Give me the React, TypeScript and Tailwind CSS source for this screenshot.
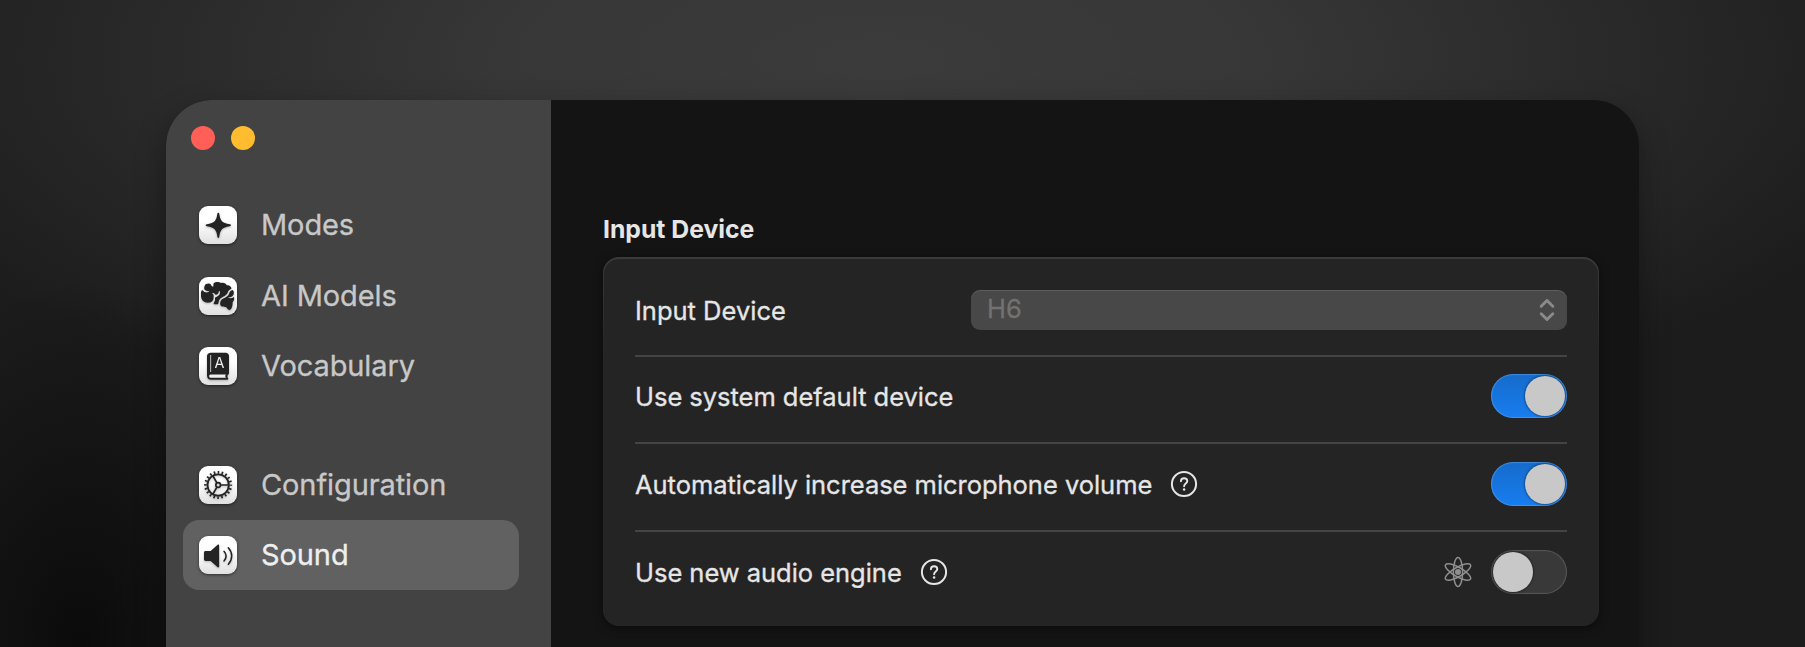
import type { ReactNode } from "react";

function SparkleIcon() {
  return (
    <path
      fill="#232323"
      d="M58 20c1.600 0 2.500 1 2.900 3.500C64 45 69 51 92.500 55.100c2.500.400 3.500 1.400 3.500 2.900s-1 2.500-3.500 2.900C69 65 64 71 60.900 92.500 60.500 95 59.600 96 58 96s-2.500-1-2.900-3.500C52 71 47 65 23.500 60.900 21 60.500 20 59.500 20 58s1-2.500 3.500-2.900C47 51 52 45 55.100 23.500 55.500 21 56.400 20 58 20Z"
    />
  );
}

function BrainIcon() {
  return (
    <g fill="#232323">
      <path d="M17 27C18 21 26 19 32 20C37 20 36 29 42 29C45 29 42 22 44 19C49 14 60 13 66 18C74 16 82 20 83 25C92 24 98 30 97 36C91 38 87 42 86 47C83 56 72 58 65 64C58 70 60 77 57 82L44 82C43 78 47 74 48 70C49 65 46 62 51 60C58 57 63 55 63 45C63 41 59 41 59 45C58 51 55 53 51 53C47 53 47 48 43 48L38 49C43 51 45 55 44 60C44 73 36 77 27 77C14 77 6 68 6 56C6 50 5 43 9 39C13 41 14 45 20 46C26 47 30 44 31 42C27 43 17 41 16 36C15 32 16 30 17 27Z" />
      <path d="M101 39C106 43 105 50 103 54C99 60 93 61 87 61C91 65 98 65 105 60C107 68 104 72 101 75C101 82 100 97 92 99C86 100 84 91 80 90C75 89 67 91 64 84C62 77 65 70 69 67C76 62 86 60 90 50C92 44 95 40 101 39Z" />
    </g>
  );
}

function BookIcon() {
  return (
    <g>
      <path
        fill="#232323"
        d="M36 17H80C86 17 90 21 90 27V78C90 81 88 83 86 84C85 88 85 91 87 93C89 95 88 98 85 98H36C29 98 24 93 24 86V28C24 21 29 17 36 17Z"
      />
      <path d="M35 25V74" stroke="#e4e4e4" strokeWidth="2.500" fill="none" strokeLinecap="round" />
      <path d="M35 82.500H81C78 85 78 90 81 92.500H35C29 92 29 83 35 82.500Z" fill="#eeeeee" />
      <text x="61" y="64" textAnchor="middle" fill="#f0f0f0" fontSize="43" className="font-[Inter]">
        A
      </text>
    </g>
  );
}

function GearIcon() {
  return (
    <g fill="none" stroke="#232323">
      <circle cx="57.500" cy="57" r="32" strokeWidth="5.500" />
      <circle cx="57.500" cy="57" r="38" strokeWidth="8" pathLength="40" strokeDasharray="0.800 1.200" strokeDashoffset="0.400" />
      <circle cx="57.500" cy="57" r="7" strokeWidth="5" />
      <path d="M65 57H89M53.700 50.500L41.500 29.300M53.700 63.500L41.500 84.700" strokeWidth="5" />
    </g>
  );
}

function SpeakerIcon() {
  return (
    <g>
      <path
        fill="#232323"
        d="M15 50C15 46.500 17 45 20 45H35L56 26.500C58.500 24.500 60.500 26 60.500 29V91C60.500 94 58.500 95.500 56 93.500L35 75H20C17 75 15 73 15 70Z"
      />
      <g fill="none" stroke="#232323" strokeWidth="4.500" strokeLinecap="round">
        <path d="M75 46C83 55 83 66 75 75" />
        <path d="M88 35.500C101.500 50 101.500 70 88 84.500" />
      </g>
    </g>
  );
}

function NavItem({ icon, label, active }: { icon: ReactNode; label: string; active?: boolean }) {
  return (
    <a
      className={
        active
          ? "flex h-[70px] items-center rounded-2xl bg-[#616161] pl-4 text-[#efefef]"
          : "flex h-[70px] items-center rounded-2xl pl-4 text-[#c8c8c8]"
      }
    >
      <span className="size-[38px] shrink-0 rounded-[9px] bg-linear-to-b from-white from-40% to-[#e0e0e0] shadow-[0_1px_3px_rgba(0,0,0,0.5)]">
        <svg viewBox="0 0 114 114" className="size-[38px] drop-shadow-[0_1px_1px_rgba(0,0,0,0.25)]">
          {icon}
        </svg>
      </span>
      <span className="ml-6 text-[29px] leading-9 tracking-[-0.1px] [-webkit-text-stroke:0.3px]">{label}</span>
    </a>
  );
}

function Toggle({ on }: { on?: boolean }) {
  return on ? (
    <span className="flex h-11 w-[76px] justify-end rounded-full bg-linear-to-b from-[#156bcb] to-[#187df0] p-0.5 shadow-[inset_0_0_1px_1px_rgba(110,170,240,0.5)]">
      <span className="size-10 rounded-full bg-[#c8c8c8] shadow-[0_0_2px_1px_rgba(0,0,0,0.35)]" />
    </span>
  ) : (
    <span className="flex h-11 w-[76px] rounded-full bg-[#393939] p-0.5 shadow-[inset_0_0_1px_1px_rgba(120,120,120,0.5)]">
      <span className="size-10 rounded-full bg-[#c8c8c8] shadow-[0_0_2px_1px_rgba(0,0,0,0.35)]" />
    </span>
  );
}

function HelpIcon() {
  return (
    <svg viewBox="0 0 28 28" className="size-7">
      <circle cx="14" cy="14" r="12.100" fill="none" stroke="#e6e6e6" strokeWidth="2" />
      <path
        d="M10.900 11.300C10.900 9.400 12.200 8.200 14.100 8.200C16 8.200 17.300 9.400 17.300 11.100C17.300 13.600 14.100 13.600 14.100 16.200"
        fill="none"
        stroke="#e6e6e6"
        strokeWidth="1.900"
        strokeLinecap="round"
      />
      <circle cx="14.100" cy="19.400" r="1.250" fill="#e6e6e6" />
    </svg>
  );
}

function AtomIcon() {
  return (
    <svg viewBox="0 0 32 32" className="size-8" fill="none" stroke="#8e8e8e" strokeWidth="1.500">
      <ellipse cx="16" cy="16" rx="4.600" ry="14.400" />
      <ellipse cx="16" cy="16" rx="4.600" ry="14.400" transform="rotate(60 16 16)" />
      <ellipse cx="16" cy="16" rx="4.600" ry="14.400" transform="rotate(120 16 16)" />
      <circle cx="16" cy="16" r="3" fill="#8e8e8e" stroke="none" />
    </svg>
  );
}

function Row({ label, help, first, children }: { label: string; help?: boolean; first?: boolean; children: ReactNode }) {
  return (
    <div
      className={
        first
          ? "flex h-[87px] items-start border-t-2 border-[#444444] pt-[17px]"
          : "flex h-[88px] items-start border-t-2 border-[#444444] pt-[18px]"
      }
    >
      <div className="flex h-11 w-full items-center">
        <span className="pt-px text-[25.5px] leading-8 tracking-[-0.03px] [-webkit-text-stroke:0.3px]">{label}</span>
        {help && (
          <span className="ml-[18px]">
            <HelpIcon />
          </span>
        )}
        <div className="ml-auto flex items-center">{children}</div>
      </div>
    </div>
  );
}

export default function App() {
  return (
    <div className="flex h-[647px] w-full justify-center overflow-hidden bg-[#1c1c1c] bg-[radial-gradient(ellipse_230px_360px_at_80px_640px,#0b0b0b_0%,transparent_100%),radial-gradient(ellipse_1080px_400px_at_880px_60px,#3b3b3b_0%,#373737_35%,transparent_100%)] pt-[100px] font-[Inter,sans-serif]">
      <div className="flex h-[760px] w-[1473px] shrink-0 overflow-hidden rounded-[46px] bg-[#141414] shadow-[0_12px_30px_rgba(0,0,0,0.35)]">
        <aside className="w-[385px] shrink-0 bg-[#434343]">
          <div className="flex gap-4 pt-[26px] pl-[25px]">
            <span className="size-6 rounded-full bg-[#ff5f57]" />
            <span className="size-6 rounded-full bg-[#febc2e]" />
          </div>
          <nav className="mt-10 pr-8 pl-[17px]">
            <NavItem icon={<SparkleIcon />} label="Modes" />
            <div className="h-px" />
            <NavItem icon={<BrainIcon />} label="AI Models" />
            <NavItem icon={<BookIcon />} label="Vocabulary" />
            <div className="h-[49px]" />
            <NavItem icon={<GearIcon />} label="Configuration" />
            <NavItem icon={<SpeakerIcon />} label="Sound" active />
          </nav>
        </aside>
        <main className="flex-1 pt-[113px] pr-10 pl-[52px] text-[#e6e6e6]">
          <h2 className="text-[24.75px] leading-8 font-bold">Input Device</h2>
          <section className="mt-3 h-[369px] rounded-2xl bg-linear-to-b from-[#3a3a3a] to-[#262626] to-[100px] px-px pt-[2px] shadow-[0_2px_10px_rgba(0,0,0,0.5)]">
            <div className="h-[366px] rounded-[15px] bg-[#242424] px-[31px]">
              <div className="flex h-24 items-center justify-between pt-1.5">
                <span className="pt-px text-[25.5px] leading-8 [-webkit-text-stroke:0.3px]">Input Device</span>
                <div className="flex h-10 w-[596px] items-center justify-between rounded-[9px] bg-[#484848] pr-[11px] pl-4 shadow-[inset_0_1px_0_rgba(255,255,255,0.12)]">
                  <span className="pb-0.5 text-[25.5px] leading-8 text-[#727272] [-webkit-text-stroke:0.3px]">H6</span>
                  <svg viewBox="0 0 18 26" className="h-[26px] w-[18px]" fill="none" stroke="#8a8a8a" strokeWidth="2.900" strokeLinecap="round" strokeLinejoin="round">
                    <path d="M3.200 9.300L9 3.500L14.800 9.300M3.200 16.700L9 22.500L14.800 16.700" />
                  </svg>
                </div>
              </div>
              <Row label="Use system default device" first>
                <Toggle on />
              </Row>
              <Row label="Automatically increase microphone volume" help>
                <Toggle on />
              </Row>
              <Row label="Use new audio engine" help>
                <span className="mr-[17px]">
                  <AtomIcon />
                </span>
                <Toggle />
              </Row>
            </div>
          </section>
        </main>
      </div>
    </div>
  );
}
